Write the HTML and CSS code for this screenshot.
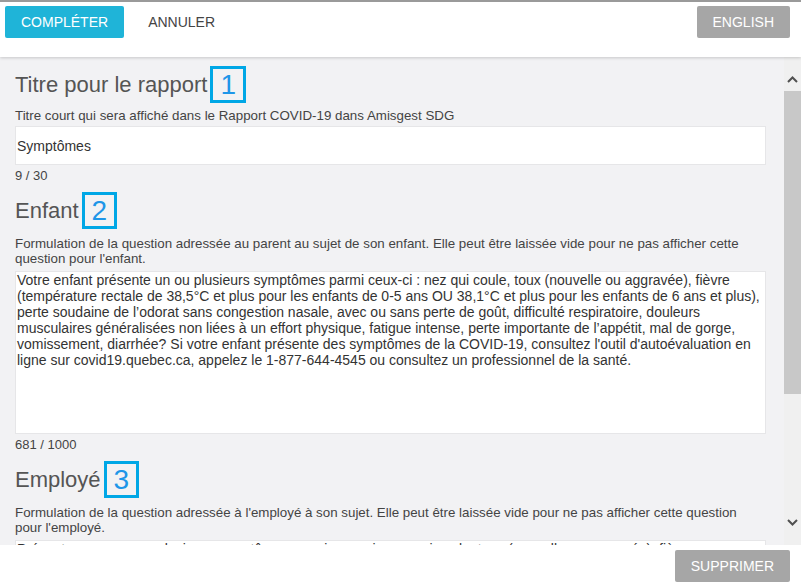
FILE: index.html
```html
<!DOCTYPE html>
<html lang="fr">
<head>
    <meta charset="UTF-8">
    <title>Question COVID-19</title>
    <link rel="stylesheet" href="styles.css">
</head>
<body>
    <div class="toolbar">
        <button class="btn btn-primary">Compléter</button>
        <button class="btn btn-flat">Annuler</button>
        <span class="spacer"></span>
        <button class="btn btn-gray">English</button>
    </div>

    <div class="main">
        <div class="content">
            <div class="section">
                <div class="heading">Titre pour le rapport <span class="step">1</span></div>
                <div class="hint">Titre court qui sera affiché dans le Rapport COVID-19 dans Amisgest SDG</div>
                <input class="field" type="text" value="Symptômes">
                <div class="counter">9 / 30</div>
            </div>

            <div class="section">
                <div class="heading">Enfant <span class="step">2</span></div>
                <div class="hint small">Formulation de la question adressée au parent au sujet de son enfant. Elle peut être laissée vide pour ne pas afficher cette question pour l'enfant.</div>
                <textarea class="field area">Votre enfant présente un ou plusieurs symptômes parmi ceux-ci : nez qui coule, toux (nouvelle ou aggravée), fièvre (température rectale de 38,5°C et plus pour les enfants de 0-5 ans OU 38,1°C et plus pour les enfants de 6 ans et plus), perte soudaine de l’odorat sans congestion nasale, avec ou sans perte de goût, difficulté respiratoire, douleurs musculaires généralisées non liées à un effort physique, fatigue intense, perte importante de l’appétit, mal de gorge, vomissement, diarrhée? Si votre enfant présente des symptômes de la COVID-19, consultez l'outil d'autoévaluation en ligne sur covid19.quebec.ca, appelez le 1-877-644-4545 ou consultez un professionnel de la santé.</textarea>
                <div class="counter">681 / 1000</div>
            </div>

            <div class="section">
                <div class="heading">Employé <span class="step">3</span></div>
                <div class="hint small">Formulation de la question adressée à l'employé à son sujet. Elle peut être laissée vide pour ne pas afficher cette question pour l'employé.</div>
                <textarea class="field area">Présentez-vous un ou plusieurs symptômes parmi ceux-ci : nez qui coule, toux (nouvelle ou aggravée), fièvre</textarea>
            </div>
        </div>

        <div class="scrollbar">
            <div class="arrow arrow-up">
                <svg width="11" height="7" viewBox="0 0 11 7"><path d="M1 6 L5.5 1.5 L10 6" fill="none" stroke="#505050" stroke-width="2"/></svg>
            </div>
            <div class="track"><div class="thumb"></div></div>
            <div class="arrow arrow-down">
                <svg width="11" height="7" viewBox="0 0 11 7"><path d="M1 1 L5.5 5.5 L10 1" fill="none" stroke="#505050" stroke-width="2"/></svg>
            </div>
        </div>
    </div>

    <div class="footer">
        <button class="btn btn-gray">Supprimer</button>
    </div>
</body>
</html>
```

FILE: styles.css
```css
html, body {
    margin: 0;
    height: 100%;
}
body {
    font-family: "Liberation Sans", Arial, sans-serif;
    display: flex;
    flex-direction: column;
    height: 583px;
    overflow: hidden;
    background-color: #fff;
    color: #444;
}
.toolbar {
    display: flex;
    align-items: flex-start;
    height: 51px;
    padding: 4px 11px 0 5px;
    border-top: 2px solid #9a9a9a;
    background-color: #fff;
    box-shadow: 0 1px 3px rgba(0,0,0,0.18);
    position: relative;
    z-index: 2;
}
.spacer {
    flex: 1;
}
.btn {
    font-family: "Liberation Sans", Arial, sans-serif;
    font-size: 14px;
    text-transform: uppercase;
    height: 32px;
    padding: 0 16px;
    border: none;
    border-radius: 2px;
    cursor: pointer;
}
.btn-primary {
    background-color: #1fb4d8;
    color: #fff;
}
.btn-flat {
    background: none;
    color: #444;
    margin-left: 8px;
}
.btn-gray {
    background-color: #a6a6a6;
    color: #fff;
}
.main {
    flex: 1;
    display: flex;
    min-height: 0;
    background-color: #f2f2f4;
}
.content {
    flex: 1;
    overflow: hidden;
    padding: 9px 18px 0 15px;
}
.section {
    margin-bottom: 9px;
}
.heading {
    display: flex;
    align-items: center;
    font-size: 22px;
    color: #555;
    height: 37px;
}
.step {
    display: inline-flex;
    align-items: center;
    justify-content: center;
    height: 31px;
    padding: 0 7px;
    margin-left: 3px;
    border: 3px solid #00a7e6;
    font-size: 28px;
    color: #1e96e8;
}
.hint {
    font-size: 13.33px;
    line-height: 15px;
    margin-top: 5px;
    margin-bottom: 3px;
}
.hint.small {
    margin-top: 7px;
    margin-bottom: 5px;
}
.field {
    display: block;
    box-sizing: border-box;
    width: 100%;
    margin: 0;
    border: 1px solid #e6e6e8;
    background-color: #fff;
    font-family: "Liberation Sans", Arial, sans-serif;
    font-size: 14px;
    color: #333;
    outline: none;
}
input.field {
    height: 39px;
    padding: 0 1px;
    margin-top: 3px;
}
.area {
    height: 163px;
    line-height: 16px;
    padding: 0 1px;
    resize: none;
    overflow: hidden;
}
.counter {
    font-size: 13px;
    line-height: 15px;
    margin-top: 3px;
}
.scrollbar {
    width: 17px;
    display: flex;
    flex-direction: column;
    background-color: #f0f0f0;
}
.arrow {
    height: 34px;
    display: flex;
    justify-content: center;
}
.arrow-up {
    align-items: flex-end;
    padding-bottom: 8px;
    box-sizing: border-box;
}
.arrow-down {
    align-items: flex-start;
    padding-top: 8px;
    box-sizing: border-box;
}
.track {
    flex: 1;
}
.thumb {
    height: 303px;
    background-color: #c8c8c8;
}
.footer {
    height: 38px;
    display: flex;
    justify-content: flex-end;
    align-items: flex-start;
    padding: 5px 11px 0 0;
    box-sizing: border-box;
    background-color: #fff;
}
```
